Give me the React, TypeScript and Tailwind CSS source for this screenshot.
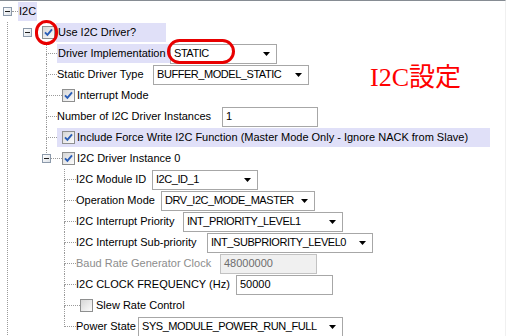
import type { ReactNode } from 'react'

// tree expander box with a minus sign
function Expander() {
  return (
    <span className="flex h-[9px] w-[9px] shrink-0 items-center justify-center border border-[#8c9aab] bg-linear-to-br from-white to-[#dde2e8]">
      <span className="h-px w-[5px] bg-[#1e1e1e]" />
    </span>
  )
}

function Check({ checked = true }: { checked?: boolean }) {
  return (
    <span className="flex h-[13px] w-[13px] shrink-0 items-center justify-center border border-[#8e8f8f] bg-linear-to-br from-[#d6d6d6] to-[#fcfcfc]">
      {checked && (
        <svg width="9" height="9" viewBox="0 0 9 9">
          <path d="M1 4.4 3.4 6.9 8 1.4" fill="none" stroke="#2a5db6" strokeWidth="1.9" />
        </svg>
      )}
    </span>
  )
}

// dotted connector from the parent's vertical line to the item
function Branch({ w, last = false, children }: { w: string; last?: boolean; children?: ReactNode }) {
  return (
    <span className={`relative flex shrink-0 flex-col ${w}`}>
      <span className="h-[11px] border-b border-l border-dotted border-[#9a9a9a]" />
      <span className={last ? 'flex-1' : 'flex-1 border-l border-dotted border-[#9a9a9a]'} />
      {children}
    </span>
  )
}

function Select({ value, w }: { value: string; w: string }) {
  return (
    <div className={`flex h-[20px] shrink-0 items-center justify-between border border-[#a7a7a7] bg-white pl-[3px] pr-[6px] ${w}`}>
      <span className="whitespace-nowrap tracking-[-0.45px]">{value}</span>
      <svg width="7" height="4" viewBox="0 0 7 4">
        <path d="M0 0h7L3.5 4z" fill="#000" />
      </svg>
    </div>
  )
}

function Input({ value, w, disabled = false }: { value: string; w: string; disabled?: boolean }) {
  return (
    <div
      className={`flex h-[20px] shrink-0 items-center border pl-[3px] ${w} ${
        disabled ? 'border-[#c2c2c2] bg-[#f0f0f0] text-[#6d6d6d]' : 'border-[#a7a7a7] bg-white'
      }`}
    >
      {value}
    </div>
  )
}

function Label({ text, w, gray = false }: { text: string; w: string; gray?: boolean }) {
  return (
    <span className={`shrink-0 whitespace-nowrap pr-[2px] ${w} ${gray ? 'text-[#8d8d8d]' : ''}`}>{text}</span>
  )
}

export default function App() {
  return (
    <div className="relative h-[336px] w-[506px] overflow-hidden border-t border-r border-t-[#868c93] border-r-[#f0f0f0] bg-white font-['Liberation_Sans','Noto_Sans_CJK_JP',sans-serif] text-[11px] leading-none text-black">
      {/* root */}
      <div className="flex h-[21px] items-center pl-[3px]">
        <Expander />
        <span className="w-[6px] border-b border-dotted border-[#9a9a9a]" />
        <span className="flex h-[19px] items-center bg-[#e0e0f8] px-px">I2C</span>
      </div>

      <div className="ml-[7px] border-l border-dotted border-[#9a9a9a]">
        {/* Use I2C Driver? */}
        <div className="flex h-[21px] items-center pl-[15px]">
          <Expander />
          <span className="ml-[10px]">
            <Check />
          </span>
          <span className="ml-px flex h-[19px] w-[110px] items-center bg-[#e0e0f8] pl-[2px]">Use I2C Driver?</span>
        </div>

        <div className="flex h-[21px] pl-[38px]">
          <Branch w="w-[11px]" />
          <div className="flex items-center">
            <span className="flex h-[19px] w-[113px] shrink-0 items-center whitespace-nowrap bg-[#e0e0f8] pl-px">
              Driver Implementation
            </span>
            <Select value="STATIC" w="w-[107px]" />
          </div>
        </div>

        <div className="flex h-[21px] pl-[38px]">
          <Branch w="w-[11px]" />
          <div className="flex items-center">
            <Label text="Static Driver Type" w="w-[96px]" />
            <Select value="BUFFER_MODEL_STATIC" w="w-[156px]" />
          </div>
        </div>

        <div className="flex h-[21px] pl-[38px]">
          <Branch w="w-[16px]" />
          <div className="flex items-center gap-[2px]">
            <Check />
            <span>Interrupt Mode</span>
          </div>
        </div>

        <div className="flex h-[21px] pl-[38px]">
          <Branch w="w-[11px]" />
          <div className="flex items-center">
            <Label text="Number of I2C Driver Instances" w="w-[165px]" />
            <Input value="1" w="w-[96px]" />
          </div>
        </div>

        <div className="flex h-[21px] pl-[38px]">
          <Branch w="w-[11px]" />
          <div className="flex items-center">
            <span className="flex h-[19px] w-[433px] items-center gap-[2px] whitespace-nowrap bg-[#e0e0f8] pl-[5px]">
              <Check />
              Include Force Write I2C Function (Master Mode Only - Ignore NACK from Slave)
            </span>
          </div>
        </div>

        <div className="flex h-[21px] pl-[38px]">
          <Branch w="w-[16px]" last>
            <span className="absolute left-[-4px] top-[6px]">
              <Expander />
            </span>
          </Branch>
          <div className="flex items-center gap-[2px]">
            <Check />
            <span>I2C Driver Instance 0</span>
          </div>
        </div>

        {/* instance 0 children */}
        <div className="flex h-[21px] pl-[56px]">
          <Branch w="w-[12px]" />
          <div className="flex items-center">
            <Label text="I2C Module ID" w="w-[76px]" />
            <Select value="I2C_ID_1" w="w-[106px]" />
          </div>
        </div>

        <div className="flex h-[21px] pl-[56px]">
          <Branch w="w-[12px]" />
          <div className="flex items-center">
            <Label text="Operation Mode" w="w-[85px]" />
            <Select value="DRV_I2C_MODE_MASTER" w="w-[154px]" />
          </div>
        </div>

        <div className="flex h-[21px] pl-[56px]">
          <Branch w="w-[12px]" />
          <div className="flex items-center">
            <Label text="I2C Interrupt Priority" w="w-[107px]" />
            <Select value="INT_PRIORITY_LEVEL1" w="w-[160px]" />
          </div>
        </div>

        <div className="flex h-[21px] pl-[56px]">
          <Branch w="w-[12px]" />
          <div className="flex items-center">
            <Label text="I2C Interrupt Sub-priority" w="w-[131px]" />
            <Select value="INT_SUBPRIORITY_LEVEL0" w="w-[166px]" />
          </div>
        </div>

        <div className="flex h-[21px] pl-[56px]">
          <Branch w="w-[12px]" />
          <div className="flex items-center">
            <Label text="Baud Rate Generator Clock" w="w-[144px]" gray />
            <Input value="48000000" w="w-[97px]" disabled />
          </div>
        </div>

        <div className="flex h-[21px] pl-[56px]">
          <Branch w="w-[12px]" />
          <div className="flex items-center">
            <Label text="I2C CLOCK FREQUENCY (Hz)" w="w-[160px]" />
            <Input value="50000" w="w-[97px]" />
          </div>
        </div>

        <div className="flex h-[21px] pl-[56px]">
          <Branch w="w-[16px]" />
          <div className="flex items-center gap-[3px]">
            <Check checked={false} />
            <span>Slew Rate Control</span>
          </div>
        </div>

        <div className="flex h-[21px] pl-[56px]">
          <Branch w="w-[12px]" last />
          <div className="flex items-center">
            <Label text="Power State" w="w-[62px]" />
            <Select value="SYS_MODULE_POWER_RUN_FULL" w="w-[205px]" />
          </div>
        </div>
      </div>

      {/* annotations */}
      <div className="absolute left-[35px] top-[19px] h-[25px] w-[23px] rounded-full border-[3px] border-[#e80000]" />
      <div className="absolute left-[167px] top-[38px] h-[25px] w-[68px] rounded-full border-[3px] border-[#e80000]" />
      <div className="absolute left-[370px] top-[64px] font-['Liberation_Serif','Noto_Sans_CJK_JP',serif] text-[26px] leading-none text-[#ff0000]">
        I2C設定
      </div>
    </div>
  )
}
